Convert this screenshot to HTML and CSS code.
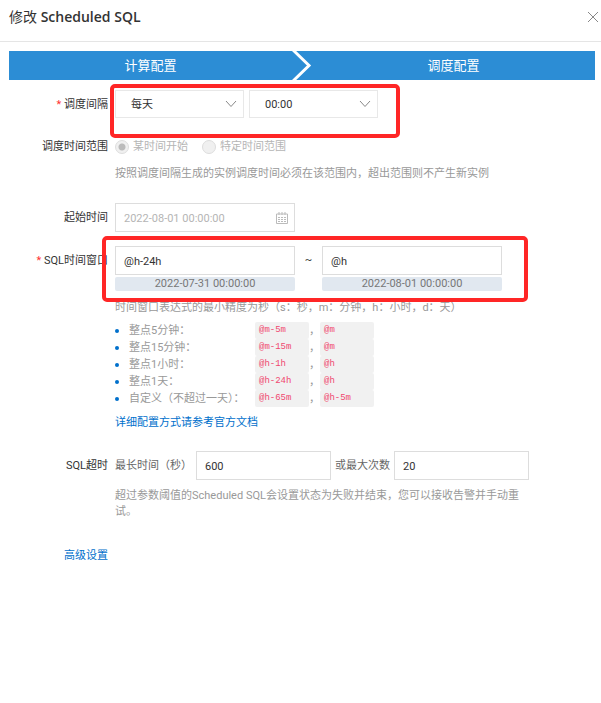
FILE: index.html
```
<!DOCTYPE html>
<html lang="zh-CN">
<head>
  <meta charset="UTF-8">
  <meta name="viewport" content="width=device-width, initial-scale=1.0">
  <title>修改 Scheduled SQL</title>
  <link rel="stylesheet" href="styles.css">
</head>
<body>
  <header class="dialog-header">
    <h1>修改 <span>Scheduled SQL</span></h1>
    <button type="button" class="close-btn" aria-label="关闭">
      <svg width="12" height="12" viewBox="0 0 12 12"><path d="M1 1l10 10M11 1L1 11"/></svg>
    </button>
  </header>

  <main class="dialog-body">
    <!-- Steps -->
    <div class="steps">
      <span class="step">计算配置</span>
      <svg class="step-arrow" width="20" height="29" viewBox="0 0 20 29"><path d="M1 -1l16 15.500L1 30"/></svg>
      <span class="step">调度配置</span>
    </div>

    <form class="form">
      <div class="row interval-row">
        <label class="label required" for="interval">调度间隔</label>
        <div class="content fields">
          <div class="select">
            <select id="interval"><option>每天</option></select>
            <svg width="12" height="8" viewBox="0 0 12 8"><path d="M1 1l5 5.500L11 1"/></svg>
          </div>
          <div class="select">
            <select aria-label="时间"><option>00:00</option></select>
            <svg width="12" height="8" viewBox="0 0 12 8"><path d="M1 1l5 5.500L11 1"/></svg>
          </div>
        </div>
        <div class="highlight"></div>
      </div>

      <div class="row range-row">
        <span class="label" id="rangeLabel">调度时间范围</span>
        <div class="content">
          <div class="radios" role="radiogroup" aria-labelledby="rangeLabel">
            <label class="radio"><input type="radio" name="range" checked disabled>某时间开始</label>
            <label class="radio"><input type="radio" name="range" disabled>特定时间范围</label>
          </div>
          <p class="help">按照调度间隔生成的实例调度时间必须在该范围内，超出范围则不产生新实例</p>
        </div>
      </div>

      <div class="row start-row">
        <label class="label" for="startTime">起始时间</label>
        <div class="content">
          <div class="date-input">
            <input class="input" type="text" id="startTime" value="2022-08-01 00:00:00" disabled>
            <svg width="12" height="12" viewBox="0 0 12 12"><path d="M.5 2h11v9.500H.5zM3 0v3M6 0v3M9 0v3M2 5.500h2M5 5.500h2M8 5.500h2M2 7.500h2M5 7.500h2M8 7.500h2M2 9.500h2M5 9.500h2M8 9.500h2"/></svg>
          </div>
        </div>
      </div>

      <div class="row window-row">
        <label class="label required" for="windowFrom">SQL时间窗口</label>
        <div class="content">
          <div class="window">
            <div class="window-side">
              <input class="input" type="text" id="windowFrom" value="@h-24h">
              <span class="preview">2022-07-31 00:00:00</span>
            </div>
            <span class="tilde">~</span>
            <div class="window-side">
              <input class="input" type="text" aria-label="窗口结束" value="@h">
              <span class="preview">2022-08-01 00:00:00</span>
            </div>
          </div>
          <p class="help">时间窗口表达式的最小精度为秒（s：秒，m：分钟，h：小时，d：天）</p>
          <ul class="examples">
            <li><span class="name">整点5分钟：</span><code>@m-5m</code>，<code>@m</code></li>
            <li><span class="name">整点15分钟：</span><code>@m-15m</code>，<code>@m</code></li>
            <li><span class="name">整点1小时：</span><code>@h-1h</code>，<code>@h</code></li>
            <li><span class="name">整点1天：</span><code>@h-24h</code>，<code>@h</code></li>
            <li><span class="name">自定义（不超过一天）：</span><code>@h-65m</code>，<code>@h-5m</code></li>
          </ul>
          <a class="doc-link" href="#">详细配置方式请参考官方文档</a>
        </div>
        <div class="highlight"></div>
      </div>

      <div class="row timeout-row">
        <span class="label">SQL超时</span>
        <div class="content">
          <div class="timeout">
            <label for="maxTime">最长时间（秒）</label>
            <input class="input" type="text" id="maxTime" value="600">
            <label for="maxRetry">或最大次数</label>
            <input class="input" type="text" id="maxRetry" value="20">
          </div>
          <p class="help">超过参数阈值的Scheduled SQL会设置状态为失败并结束，您可以接收告警并手动重试。</p>
        </div>
      </div>

      <div class="row">
        <a class="label advanced" href="#">高级设置</a>
      </div>
    </form>
  </main>
</body>
</html>
```
FILE: styles.css
```
/* General Styles */
* {
  box-sizing: border-box;
}

body {
  margin: 0;
  background: #fff;
  color: #333;
  font-family: Roboto, "Noto Sans CJK SC", sans-serif;
  font-size: 11px;
  line-height: 16px;
}

input, select, button {
  font: inherit;
  color: inherit;
}

svg {
  fill: none;
  stroke: #888;
}

p, ul {
  margin: 0;
  padding: 0;
}

a {
  color: #0070cc;
  text-decoration: none;
}

/* Header */
.dialog-header {
  display: flex;
  justify-content: space-between;
  align-items: center;
  height: 42px;
  padding: 0 2px 8px 9px;
  border-bottom: 1px solid #e5e5e5;
}

h1 {
  margin: 0;
  font-family: "Open Sans", "Noto Sans CJK SC", sans-serif;
  font-size: 14px;
  font-weight: 400;
}

h1 span {
  font-weight: 600;
}

.close-btn {
  display: flex;
  padding: 0;
  border: none;
  background: none;
  cursor: pointer;
}

/* Steps */
.dialog-body {
  padding: 9px 6px 9px 9px;
}

.steps {
  display: flex;
  align-items: center;
  height: 29px;
  background: #2c8dd5;
  color: #fff;
  font-size: 13px;
}

.step {
  flex: 1;
  text-align: center;
}

.step-arrow {
  stroke: #fff;
  stroke-width: 3;
}

/* Form */
.form {
  padding-top: 10px;
}

.row {
  display: grid;
  grid-template-columns: 99px minmax(0, 414px);
  column-gap: 7px;
  align-items: start;
  position: relative;
}

.label {
  line-height: 30px;
  text-align: right;
  white-space: nowrap;
}

.required::before {
  content: "* ";
  color: #f33;
}

.help {
  color: #999;
}

.input {
  width: 100%;
  height: 29px;
  padding: 1px 8px 0;
  border: 1px solid #ddd;
  background: #fff;
}

.input:disabled {
  color: #b5b5b5;
}

.fields {
  display: flex;
  gap: 5px;
}

.select,
.date-input {
  display: grid;
  align-items: center;
}

.select > *,
.date-input > * {
  grid-area: 1 / 1;
}

.select svg,
.date-input svg {
  justify-self: end;
  margin-right: 7px;
  pointer-events: none;
}

.select select {
  appearance: none;
  width: 129px;
  height: 28px;
  padding: 1px 15px 0;
  border: 1px solid #e8e8e8;
  background: #fff;
}

.date-input {
  width: 180px;
}

.date-input svg {
  stroke: #bbb;
}

/* Radios */
.range-row {
  margin-top: 12px;
}

.radios {
  display: flex;
  gap: 14px;
  height: 30px;
}

.radio {
  display: flex;
  align-items: center;
  gap: 4px;
  color: #b5b5b5;
}

.radio input {
  appearance: none;
  width: 14px;
  height: 14px;
  margin: 0;
  border: 1px solid #ddd;
  border-radius: 50%;
  background: #f0f0f0;
}

.radio input:checked {
  background: radial-gradient(circle, #bbb 3px, #f0f0f0 4px);
}

.radios + .help {
  margin-top: 4px;
}

.start-row {
  margin-top: 21px;
}

/* Time window */
.window-row {
  margin-top: 13px;
}

.window {
  display: flex;
}

.window-side {
  display: flex;
  flex-direction: column;
  gap: 2px;
  width: 180px;
}

.preview {
  background: #e1e8f0;
  border-radius: 2px;
  color: #777;
  line-height: 14px;
  text-align: center;
}

.tilde {
  width: 27px;
  line-height: 28px;
  text-align: center;
}

.window + .help {
  margin-top: 9px;
}

.examples {
  margin-top: 6px;
  list-style: none;
}

.examples li {
  display: flex;
  align-items: center;
  color: #999;
  line-height: 17px;
}

.examples li::before {
  content: "";
  width: 4px;
  height: 4px;
  margin-right: 10px;
  border-radius: 50%;
  background: #0070cc;
}

.examples .name {
  width: 126px;
}

.examples code {
  width: 54px;
  padding-left: 4px;
  border-radius: 2px;
  background: #f1f1f1;
  color: #f04870;
  font-family: "Liberation Mono", monospace;
  font-size: 9px;
}

.doc-link {
  display: block;
  margin-top: 8px;
}

/* Timeout */
.timeout-row {
  margin-top: 20px;
}

.timeout {
  display: flex;
  align-items: center;
  gap: 4px;
  color: #666;
  white-space: nowrap;
}

.timeout .input {
  flex: 1;
  min-width: 0;
  color: #333;
}

.timeout-row .help {
  margin-top: 8px;
}

.advanced {
  margin-top: 21px;
}

/* Red frames drawn over the fields */
.highlight {
  position: absolute;
  border: 4px solid #ff2626;
  border-radius: 5px;
  pointer-events: none;
}

.interval-row .highlight {
  top: -6px;
  left: 101px;
  width: 290px;
  height: 54px;
}

.window-row .highlight {
  top: -10px;
  left: 93px;
  width: 426px;
  height: 66px;
}
```
